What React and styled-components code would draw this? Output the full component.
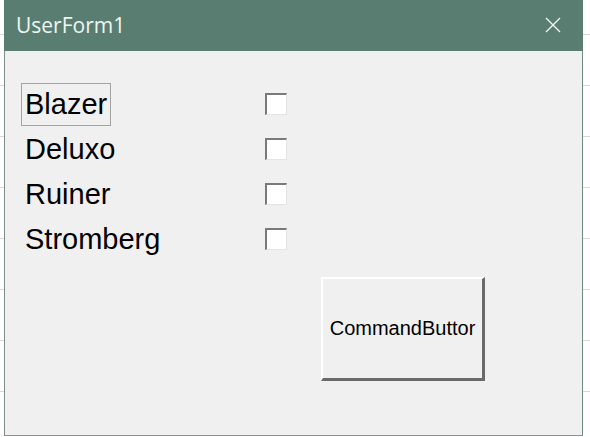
import React from 'react'
import styled, { createGlobalStyle } from 'styled-components'

const GlobalStyle = createGlobalStyle`
  html, body {
    margin: 0;
    padding: 0;
    background: #ffffff;
  }
`

const Desktop = styled.div`
  width: 590px;
  height: 437px;
  box-sizing: border-box;
  padding-left: 4px;
  overflow: hidden;
  background-color: #ffffff;
  background-image: repeating-linear-gradient(
    to bottom,
    transparent 0px,
    transparent 34px,
    #d6d6d6 34px,
    #d6d6d6 35px,
    transparent 35px,
    transparent 51px
  );
`

const Window = styled.div`
  width: 579px;
  height: 436px;
  display: flex;
  flex-direction: column;
  box-sizing: border-box;
  background: #f0f0f0;
  border-left: 1px solid #7d8c87;
  border-right: 1px solid #6f8a82;
  border-bottom: 1px solid #8a9591;
`

const TitleBar = styled.div`
  height: 51px;
  margin: 0 -1px;
  flex-shrink: 0;
  display: flex;
  align-items: center;
  justify-content: space-between;
  padding: 0 22px 1px 12px;
  box-sizing: border-box;
  background: #5a7d72;
  color: #eef5f2;
  font-family: "Open Sans", "Noto Sans", sans-serif;
  font-size: 21px;
`

const CloseIcon = () => (
  <svg width="16" height="16" viewBox="0 0 16 16">
    <path d="M1 1 L15 15 M15 1 L1 15" stroke="#eef5f2" strokeWidth="1.4" fill="none" />
  </svg>
)

const FormBody = styled.div`
  flex: 1;
  padding: 31px 0 0 16px;
  font-family: "Liberation Sans", Arial, sans-serif;
  color: #000000;
`

const FieldGrid = styled.div`
  display: grid;
  grid-template-columns: 244px 22px;
  grid-auto-rows: 45px;
  align-items: center;
`

const Label = styled.div`
  justify-self: start;
  box-sizing: border-box;
  height: 43px;
  display: flex;
  align-items: center;
  padding: 0 3px;
  font-size: 29px;
  border: 1px solid ${({ focused }) => (focused ? '#a3a3a3' : 'transparent')};
`

const CheckBox = styled.div`
  width: 22px;
  height: 22px;
  margin-top: -2px;
  box-sizing: border-box;
  background: #ffffff;
  border-style: solid;
  border-width: 2px 1px 1px 2px;
  border-color: #7a7a7a #e4e4e4 #e4e4e4 #7a7a7a;
`

const CommandButton = styled.div`
  width: 164px;
  height: 104px;
  margin: 15px 0 0 300px;
  box-sizing: border-box;
  display: flex;
  align-items: center;
  justify-content: center;
  background: #f0f0f0;
  border-style: solid;
  border-width: 2px 3px 3px 2px;
  border-color: #ffffff #6a6a6a #6a6a6a #ffffff;
  font-size: 20px;
  white-space: nowrap;
  overflow: hidden;
`

const cars = ['Blazer', 'Deluxo', 'Ruiner', 'Stromberg']

const App = () => (
  <Desktop>
    <GlobalStyle />
    <Window>
      <TitleBar>
        <span>UserForm1</span>
        <CloseIcon />
      </TitleBar>
      <FormBody>
        <FieldGrid>
          {cars.map((car, i) => (
            <React.Fragment key={car}>
              <Label focused={i === 0}>{car}</Label>
              <CheckBox />
            </React.Fragment>
          ))}
        </FieldGrid>
        <CommandButton>CommandButtor</CommandButton>
      </FormBody>
    </Window>
  </Desktop>
)

export default App
